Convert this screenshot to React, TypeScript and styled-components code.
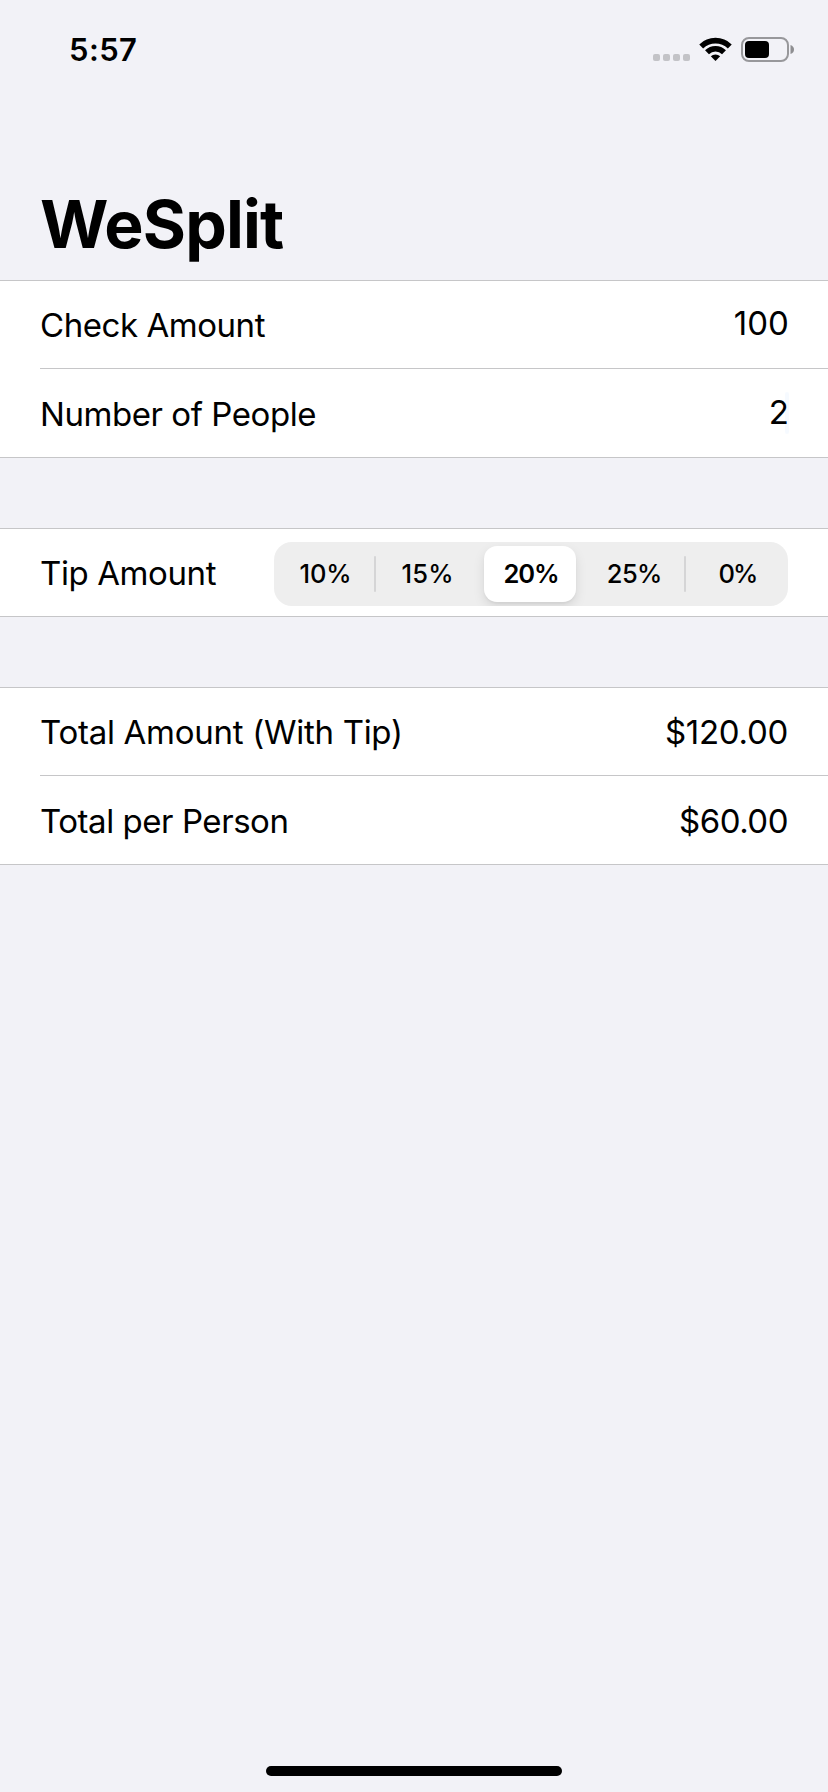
import React, { useState } from "react";
import styled, { createGlobalStyle } from "styled-components";

const GlobalStyle = createGlobalStyle`
  *, *::before, *::after { box-sizing: border-box; }
  body { margin: 0; background: #f2f2f7; }
`;

const Screen = styled.div`
  display: flex;
  flex-direction: column;
  width: 828px;
  height: 1792px;
  background: #f2f2f7;
  color: #000;
  font-family: Inter, "Liberation Sans", sans-serif;
  white-space: nowrap;
`;

const StatusBar = styled.header`
  display: flex;
  justify-content: space-between;
  align-items: center;
  height: 100px;
  padding: 0 33px 0 69px;
`;

const Clock = styled.time`
  font-size: 31px;
  font-weight: 600;
  line-height: 40px;
  letter-spacing: 0.4px;
`;

const StatusIcons = styled.div`
  display: flex;
  align-items: flex-start;
  height: 26px;
`;

const Title = styled.h1`
  margin: 0;
  height: 180px;
  padding: 84px 0 0 40px;
  font-size: 66px;
  font-weight: 700;
  line-height: 80px;
  letter-spacing: -0.86px;
`;

const Section = styled.section`
  flex: none;
  margin-bottom: 70px;
  border: solid #c6c6c8;
  border-width: 1px 0;
  background: #fff;
`;

const Row = styled.div<{ $height: number; $divided?: boolean }>`
  display: flex;
  justify-content: space-between;
  height: ${(p) => p.$height}px;
  margin-left: 40px;
  padding-right: 40px;
  border-bottom: ${(p) => (p.$divided ? "1px solid #c6c6c8" : "none")};

  & + & {
    padding-top: 1px;
  }
`;

const Label = styled.span<{ $spacing: number }>`
  font-size: 33px;
  line-height: 88px;
  letter-spacing: ${(p) => p.$spacing}px;
`;

const Amount = styled(Label)``;

const Entry = styled(Label)`
  position: relative;
  margin-right: -1px;
  line-height: 84px;
`;

const Caret = styled.i`
  position: absolute;
  top: 22px;
  right: 0;
  width: 4px;
  height: 42px;
  border-radius: 2px;
  background: rgba(0, 122, 255, 0.035);
`;

const Segments = styled.div`
  display: grid;
  grid-template-columns: 101px 1fr 1fr 1fr 103px;
  align-items: center;
  width: 514px;
  height: 64px;
  margin-top: 13px;
  border-radius: 18px;
  background: #eeeeee;
  overflow: hidden;
`;

const Segment = styled.button<{ $selected: boolean; $divider: boolean; $spacing: number }>`
  position: relative;
  justify-self: center;
  width: ${(p) => (p.$selected ? "92px" : "100%")};
  height: 56px;
  padding: 0 0 0 2px;
  border: 0;
  border-radius: 13px;
  background: ${(p) => (p.$selected ? "#fff" : "transparent")};
  box-shadow: ${(p) => (p.$selected ? "0 5px 12px rgba(0,0,0,.1), 0 2px 2px rgba(0,0,0,.04)" : "none")};
  color: #000;
  font: ${(p) => (p.$selected ? 600 : 500)} 25.5px/56px Inter, "Liberation Sans", sans-serif;
  letter-spacing: ${(p) => p.$spacing}px;

  &::after {
    content: "";
    display: ${(p) => (p.$divider ? "block" : "none")};
    position: absolute;
    top: 10px;
    right: -1px;
    width: 2px;
    height: 36px;
    border-radius: 1px;
    background: #d5d5d6;
  }
`;

const HomeIndicator = styled.div`
  width: 296px;
  height: 10px;
  margin: auto auto 16px;
  border-radius: 5px;
  background: #000;
`;

function SignalIcon() {
  return (
    <svg width="142" height="26" viewBox="0 0 142 26" aria-hidden="true">
      <g fill="#c3c3c7">
        <rect x="0" y="17" width="7" height="7" rx="2" />
        <rect x="10" y="17" width="7" height="7" rx="2" />
        <rect x="20" y="17" width="7" height="7" rx="2" />
        <rect x="30" y="17" width="7" height="7" rx="2" />
      </g>
      <g fill="none" stroke="#000" strokeWidth="5.6">
        <path d="M48.2 9.4A20.7 20.7 0 0 1 76.8 9.4" />
        <path d="M54 15.2A12.2 12.2 0 0 1 71 15.2" />
      </g>
      <path d="M62.5 24L57.8 19.3A6.9 6.9 0 0 1 67.2 19.3Z" />
      <rect x="89" y="1" width="46" height="23" rx="7" fill="none" stroke="#98989b" strokeWidth="2" />
      <rect x="92" y="4" width="24" height="17" rx="4" />
      <path d="M137.5 8C140 9 141 10.5 141 12.5S140 16 137.5 17Z" fill="#8e8e91" />
    </svg>
  );
}

const tips = [
  { text: "10%", spacing: -0.17, divider: true },
  { text: "15%", spacing: 0.3, divider: false },
  { text: "20%", spacing: -1.1, divider: false },
  { text: "25%", spacing: -0.6, divider: true },
  { text: "0%", spacing: -1.9, divider: false },
];

export default function App() {
  const [selected, setSelected] = useState("20%");
  return (
    <Screen>
      <GlobalStyle />
      <StatusBar>
        <Clock>5:57</Clock>
        <StatusIcons>
          <SignalIcon />
        </StatusIcons>
      </StatusBar>
      <Title>WeSplit</Title>
      <Section>
        <Row $height={88} $divided>
          <Label $spacing={-0.45}>Check Amount</Label>
          <Entry $spacing={0.1}>100</Entry>
        </Row>
        <Row $height={88}>
          <Label $spacing={-0.44}>Number of People</Label>
          <Entry $spacing={0}>
            2<Caret />
          </Entry>
        </Row>
      </Section>
      <Section>
        <Row $height={87}>
          <Label $spacing={-0.4}>Tip Amount</Label>
          <Segments>
            {tips.map((tip) => (
              <Segment
                key={tip.text}
                $selected={tip.text === selected}
                $divider={tip.divider}
                $spacing={tip.spacing}
                onClick={() => setSelected(tip.text)}
              >
                {tip.text}
              </Segment>
            ))}
          </Segments>
        </Row>
      </Section>
      <Section>
        <Row $height={88} $divided>
          <Label $spacing={-0.28}>Total Amount (With Tip)</Label>
          <Amount $spacing={-0.28}>$120.00</Amount>
        </Row>
        <Row $height={88}>
          <Label $spacing={-0.45}>Total per Person</Label>
          <Amount $spacing={-0.5}>$60.00</Amount>
        </Row>
      </Section>
      <HomeIndicator />
    </Screen>
  );
}
